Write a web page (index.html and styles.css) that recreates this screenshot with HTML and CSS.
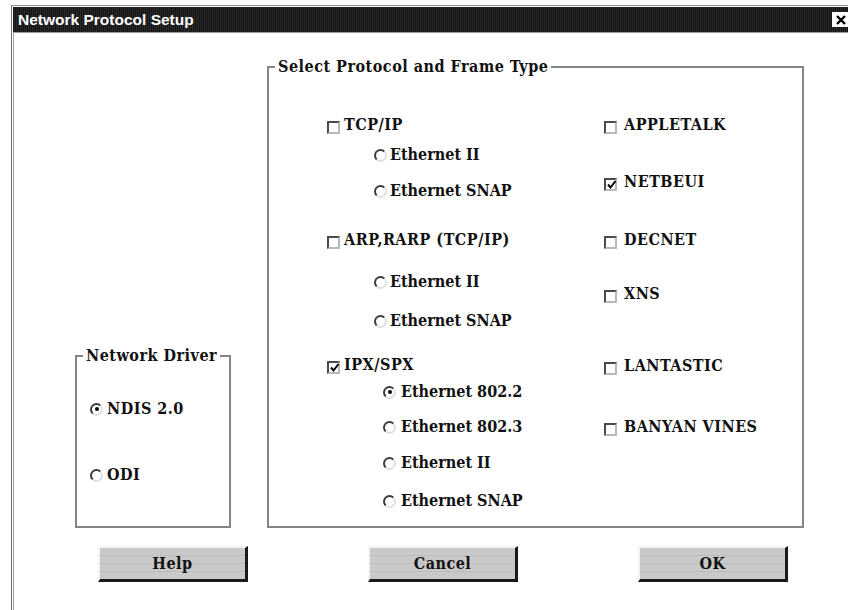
FILE: index.html
```html
<!doctype html>
<html lang="en">
<head>
  <meta charset="utf-8">
  <title>Network Protocol Setup</title>
  <link rel="stylesheet" href="styles.css">
</head>
<body>
  <div class="window">
    <div class="titlebar">
      <span class="title">Network Protocol Setup</span>
      <span class="close">
        <svg width="12" height="12" viewBox="0 0 12 12"><path d="M2 2L10 10M10 2L2 10" stroke="#000" stroke-width="2.4"/></svg>
      </span>
    </div>

    <div class="panel">
      <div class="groups">
        <fieldset class="group driver">
          <legend>Network Driver</legend>
          <div class="driver-list">
            <div class="opt"><span class="radio on"></span>NDIS 2.0</div>
            <div class="opt"><span class="radio"></span>ODI</div>
          </div>
        </fieldset>

        <fieldset class="group protocols">
          <legend>Select Protocol and Frame Type</legend>
          <div class="cols">
            <div class="col col-main">
              <div class="opt"><span class="box"></span>TCP/IP</div>
              <div class="opt sub"><span class="radio"></span>Ethernet II</div>
              <div class="opt sub"><span class="radio"></span>Ethernet SNAP</div>
              <div class="opt"><span class="box"></span>ARP,RARP (TCP/IP)</div>
              <div class="opt sub"><span class="radio"></span>Ethernet II</div>
              <div class="opt sub"><span class="radio"></span>Ethernet SNAP</div>
              <div class="opt"><span class="box on"><svg width="11" height="11" viewBox="0 0 11 11"><path d="M2 5.5L4.5 8.5L9.5 2" fill="none" stroke="#000" stroke-width="2"/></svg></span>IPX/SPX</div>
              <div class="opt sub deep"><span class="radio on"></span>Ethernet 802.2</div>
              <div class="opt sub deep"><span class="radio"></span>Ethernet 802.3</div>
              <div class="opt sub deep"><span class="radio"></span>Ethernet II</div>
              <div class="opt sub deep"><span class="radio"></span>Ethernet SNAP</div>
            </div>
            <div class="col col-side">
              <div class="opt"><span class="box"></span>APPLETALK</div>
              <div class="opt"><span class="box on"><svg width="11" height="11" viewBox="0 0 11 11"><path d="M2 5.5L4.5 8.5L9.5 2" fill="none" stroke="#000" stroke-width="2"/></svg></span>NETBEUI</div>
              <div class="opt"><span class="box"></span>DECNET</div>
              <div class="opt"><span class="box"></span>XNS</div>
              <div class="opt"><span class="box"></span>LANTASTIC</div>
              <div class="opt"><span class="box"></span>BANYAN VINES</div>
            </div>
          </div>
        </fieldset>
      </div>

      <div class="buttons">
        <button class="btn">Help</button>
        <button class="btn">Cancel</button>
        <button class="btn">OK</button>
      </div>
    </div>
  </div>
</body>
</html>
```

FILE: styles.css
```css
html,body{margin:0;padding:0;background:#fff;height:610px;overflow:hidden}
body{
  font-family:"DejaVu Serif Condensed","DejaVu Serif","Liberation Serif",serif;
  font-stretch:condensed;font-weight:bold;font-size:16px;color:#111
}

.window{
  margin:5px 0 0 11px;width:850px;height:605px;
  border-top:1px solid #8a8a8a;border-left:1px solid #6e6e6e;
  padding:1px 0 0 1px;box-sizing:border-box
}
.titlebar{
  height:25px;display:flex;align-items:center;justify-content:space-between;
  padding:0 0 0 5px;
  background:#1d1d1d repeating-linear-gradient(90deg,#151515 0 1px,#2a2a2a 1px 2px);
  border-bottom:1px solid #9a9a9a
}
.title{
  font-family:"Liberation Sans",Arial,sans-serif;font-stretch:normal;
  font-size:15.5px;font-weight:bold;color:#fff
}
.close{
  width:18px;height:15px;background:#fff;margin-right:11px;
  display:flex;align-items:center;justify-content:center
}

.panel{border-left:1px solid #a5a5a5;height:100%}

.groups{display:flex;align-items:flex-end;gap:36px;padding:24px 0 0 61px}
.group{
  margin:0;border:2px solid #858585;padding:0;min-width:0
}
.group legend{margin-left:6px;padding:0 3px;line-height:20px;letter-spacing:.5px}

.driver{width:156px;box-sizing:border-box}
.driver-list{display:grid;grid-template-rows:66px 20px;padding:33px 0 41px 13px}

.protocols{width:537px;box-sizing:border-box}
.cols{display:grid;grid-template-columns:277px 1fr;padding:38px 0 15px 58px}
.col-main{display:grid;grid-template-rows:30px 36px 49px 42px 39px 44px 27px 35px 36px 38px 20px}
.col-side{display:grid;grid-template-rows:57px 58px 54px 72px 61px 20px;align-content:start}

.opt{display:flex;align-items:center;gap:4px;height:20px;line-height:20px;letter-spacing:.5px}
.col-side .opt{gap:7px}
.sub{margin-left:47px;gap:3px;letter-spacing:0}
.sub.deep{margin-left:56px;gap:5px}

.box{
  width:13px;height:13px;box-sizing:border-box;flex:none;margin-top:5px;
  border:2px solid;border-color:#4a4a4a #b8b8b8 #b8b8b8 #4a4a4a;
  display:flex;align-items:center;justify-content:center
}
.box svg{display:block;margin:-1px -2px 0 0}
.radio{
  width:13px;height:13px;box-sizing:border-box;flex:none;border-radius:50%;
  border:2px solid;border-color:#3a3a3a #e0e0e0 #e0e0e0 #3a3a3a;position:relative
}
.radio.on::after{
  content:"";position:absolute;left:2.5px;top:2.5px;width:4px;height:4px;
  border-radius:50%;background:#000
}

.buttons{display:flex;gap:120px;padding:18px 0 0 84px}
.btn{
  width:150px;height:36px;box-sizing:border-box;padding:0;
  font:inherit;font-stretch:condensed;color:#111;letter-spacing:.5px;
  background:#c9c9c9 repeating-linear-gradient(180deg,#c9c9c9 0 7px,#bdbdbd 7px 8px);
  border:2px solid;border-color:#f4f4f4 #1a1a1a #1a1a1a #f4f4f4;
  border-right-width:3px;border-bottom-width:3px
}
```
